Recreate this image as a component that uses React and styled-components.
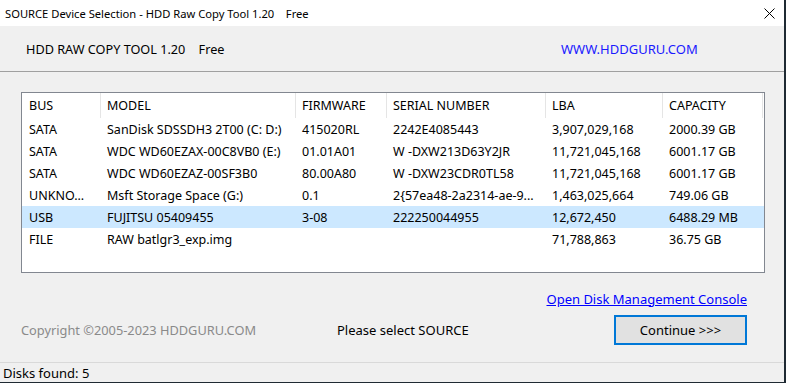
import React from "react";
import styled, { createGlobalStyle } from "styled-components";

const Global = createGlobalStyle`
  html, body { margin: 0; padding: 0; background: #1f2a33; }
  body { font-family: "Noto Sans", "Open Sans", sans-serif; color: #000; }
`;

const Window = styled.div`
  width: 784px;
  height: 382px;
  background: #f0f0f0;
  display: flex;
  flex-direction: column;
  overflow: hidden;
`;

const TitleBar = styled.div`
  height: 26px;
  background: #fff;
  display: flex;
  align-items: center;
  justify-content: space-between;
  font-size: 11.2px;
  padding-left: 5px;
  white-space: pre;
`;

const CloseButton = styled.div`
  width: 46px;
  height: 26px;
  display: flex;
  align-items: center;
  justify-content: center;
  margin-right: -8px;
`;

const Header = styled.div`
  height: 45px;
  border-bottom: 1px solid #a0a0a0;
  display: flex;
  align-items: center;
  padding-left: 26px;
  font-size: 12.7px;
  white-space: pre;
`;

const HeaderTitle = styled.span`
  width: 535px;
`;

const SiteLink = styled.span`
  color: #1a1aff;
  font-size: 13px;
`;

const Content = styled.div`
  flex: 1;
  display: flex;
  flex-direction: column;
  padding: 20px 19px 0 21px;
`;

const ListBox = styled.div`
  height: 179px;
  border: 1px solid #828790;
  background: #fff;
  font-size: 12.5px;
`;

const cols = "79px 195px 91px 159px 117px 100px";

const HeadRow = styled.div`
  display: grid;
  grid-template-columns: ${cols};
  height: 25px;
`;

const HeadCell = styled.div`
  border-right: 1px solid #e5e5e5;
  display: flex;
  align-items: center;
  padding-left: ${(p) => (p.$first ? "7px" : "6px")};
`;

const Row = styled.div`
  display: grid;
  grid-template-columns: ${cols};
  height: 22px;
  background: ${(p) => (p.$selected ? "#cce8ff" : "transparent")};
`;

const Cell = styled.div`
  display: flex;
  align-items: center;
  white-space: nowrap;
  overflow: hidden;
  padding-left: ${(p) => (p.$first ? "7px" : "6px")};
`;

const Footer = styled.div`
  display: flex;
  flex-direction: column;
  padding-right: 18px;
`;

const LinkRow = styled.div`
  display: flex;
  justify-content: flex-end;
  margin-top: 16px;
  height: 19px;
  align-items: center;
`;

const DiskLink = styled.span`
  color: #0000ff;
  text-decoration: underline;
  font-size: 13px;
`;

const ActionRow = styled.div`
  display: flex;
  align-items: center;
  margin-top: 7px;
  font-size: 13px;
`;

const Copyright = styled.span`
  color: #8a8a8a;
  width: 316px;
  font-size: 12.8px;
`;

const Message = styled.span`
  flex: 1;
`;

const ContinueButton = styled.div`
  width: 129px;
  height: 26px;
  border: 2px solid #0078d7;
  background: #e1e1e1;
  display: flex;
  align-items: center;
  justify-content: center;
  font-size: 13px;
`;

const StatusBar = styled.div`
  height: 19px;
  border-top: 1px solid #d9d9d9;
  display: flex;
  align-items: center;
  padding-left: 3px;
  font-size: 13px;
  color: #000;
`;

const headers = ["BUS", "MODEL", "FIRMWARE", "SERIAL NUMBER", "LBA", "CAPACITY"];

const disks = [
  ["SATA", "SanDisk SDSSDH3 2T00 (C: D:)", "415020RL", "2242E4085443", "3,907,029,168", "2000.39 GB"],
  ["SATA", "WDC WD60EZAX-00C8VB0 (E:)", "01.01A01", "W -DXW213D63Y2JR", "11,721,045,168", "6001.17 GB"],
  ["SATA", "WDC WD60EZAZ-00SF3B0", "80.00A80", "W -DXW23CDR0TL58", "11,721,045,168", "6001.17 GB"],
  ["UNKNO...", "Msft Storage Space (G:)", "0.1", "2{57ea48-2a2314-ae-9...", "1,463,025,664", "749.06 GB"],
  ["USB", "FUJITSU 05409455", "3-08", "222250044955", "12,672,450", "6488.29 MB", true],
  ["FILE", "RAW batlgr3_exp.img", "", "", "71,788,863", "36.75 GB"],
];

export default function App() {
  return (
    <>
      <Global />
      <Window>
        <TitleBar>
          <span>SOURCE Device Selection - HDD Raw Copy Tool 1.20    Free</span>
          <CloseButton>
            <svg width="11" height="11" viewBox="0 0 11 11">
              <path d="M0.5 0.5 L10.5 10.5 M10.5 0.5 L0.5 10.5" stroke="#000" strokeWidth="1" fill="none" />
            </svg>
          </CloseButton>
        </TitleBar>
        <Header>
          <HeaderTitle>HDD RAW COPY TOOL 1.20    Free</HeaderTitle>
          <SiteLink>WWW.HDDGURU.COM</SiteLink>
        </Header>
        <Content>
          <ListBox>
            <HeadRow>
              {headers.map((h, i) => (
                <HeadCell key={h} $first={i === 0}>{h}</HeadCell>
              ))}
            </HeadRow>
            {disks.map((d, r) => (
              <Row key={r} $selected={d[6]}>
                {d.slice(0, 6).map((c, i) => (
                  <Cell key={i} $first={i === 0}>{c}</Cell>
                ))}
              </Row>
            ))}
          </ListBox>
          <Footer>
            <LinkRow>
              <DiskLink>Open Disk Management Console</DiskLink>
            </LinkRow>
            <ActionRow>
              <Copyright>Copyright ©2005-2023 HDDGURU.COM</Copyright>
              <Message>Please select SOURCE</Message>
              <ContinueButton>Continue &gt;&gt;&gt;</ContinueButton>
            </ActionRow>
          </Footer>
        </Content>
        <StatusBar>Disks found: 5</StatusBar>
      </Window>
    </>
  );
}
